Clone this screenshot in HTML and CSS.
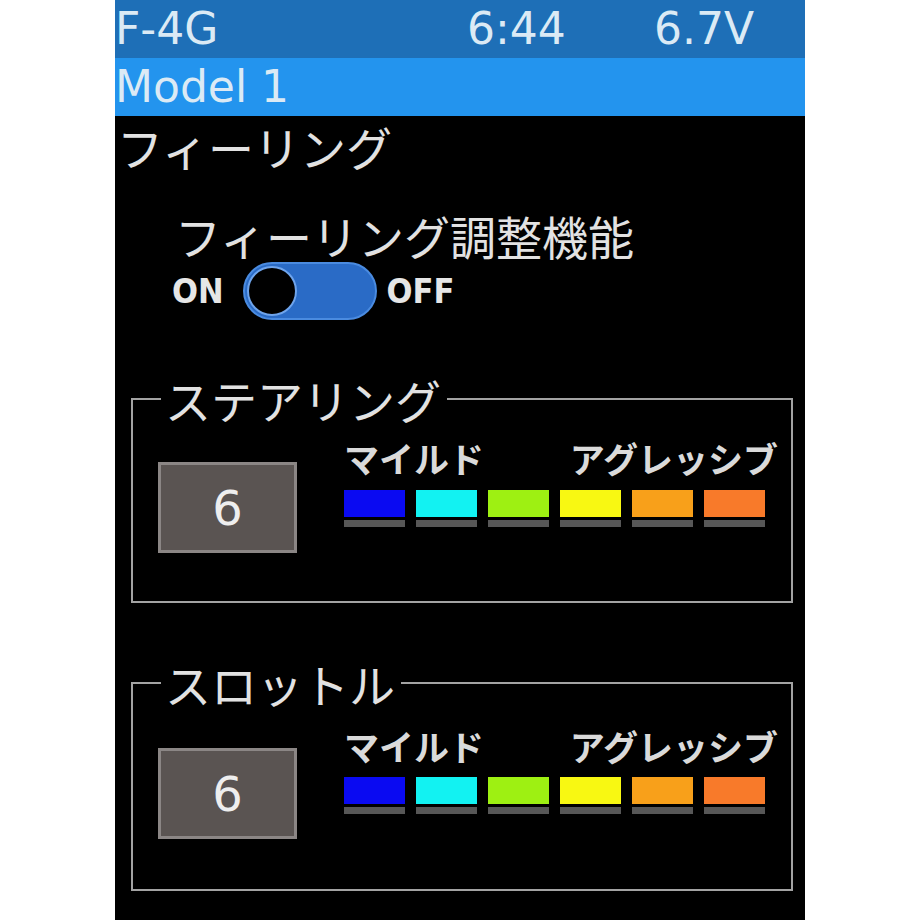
FILE: index.html
```html
<!DOCTYPE html>
<html lang="ja">
<head>
<meta charset="utf-8">
<title>フィーリング</title>
<link rel="stylesheet" href="styles.css">
</head>
<body>
<div class="screen">
  <div class="bar bar-top"><span class="model-name">F-4G</span><span class="clock">6:44</span><span class="volt">6.7V</span></div>
  <div class="bar bar-model">Model 1</div>
  <div class="page-title">フィーリング</div>
  <div class="feature-name">フィーリング調整機能</div>
  <div class="switch-row">
    <span class="sw-label">ON</span>
    <span class="switch"><span class="knob"></span></span>
    <span class="sw-label">OFF</span>
  </div>
  <fieldset class="group">
    <legend>ステアリング</legend>
    <div class="group-body">
      <div class="value">6</div>
      <div class="scale">
        <div class="scale-labels"><span>マイルド</span><span>アグレッシブ</span></div>
        <div class="scale-bars">
          <div class="cell"><div class="swatch c1"></div></div>
          <div class="cell"><div class="swatch c2"></div></div>
          <div class="cell"><div class="swatch c3"></div></div>
          <div class="cell"><div class="swatch c4"></div></div>
          <div class="cell"><div class="swatch c5"></div></div>
          <div class="cell"><div class="swatch c6"></div></div>
        </div>
      </div>
    </div>
  </fieldset>
  <fieldset class="group group-throttle">
    <legend>スロットル</legend>
    <div class="group-body">
      <div class="value">6</div>
      <div class="scale">
        <div class="scale-labels"><span>マイルド</span><span>アグレッシブ</span></div>
        <div class="scale-bars">
          <div class="cell"><div class="swatch c1"></div></div>
          <div class="cell"><div class="swatch c2"></div></div>
          <div class="cell"><div class="swatch c3"></div></div>
          <div class="cell"><div class="swatch c4"></div></div>
          <div class="cell"><div class="swatch c5"></div></div>
          <div class="cell"><div class="swatch c6"></div></div>
        </div>
      </div>
    </div>
  </fieldset>
</div>
</body>
</html>
```

FILE: styles.css
```css
body {
  margin: 0;
  background: #ffffff;
}

.screen {
  width: 690px;
  height: 920px;
  margin-left: 115px;
  background: #000000;
  overflow: hidden;
  font-family: "Noto Sans CJK JP", sans-serif;
  color: #e2e2e2;
}

.bar {
  height: 58px;
  font-family: "DejaVu Sans", sans-serif;
  font-size: 44px;
  line-height: 58px;
  color: #dbeaf5;
  white-space: nowrap;
}

.bar-top {
  display: flex;
  background: #1e6fb7;
}

.bar-model {
  background: #2394ee;
}

.model-name {
  width: 352px;
}

.clock {
  width: 187px;
}

.page-title {
  font-size: 46px;
  line-height: 60px;
  padding-left: 2px;
}

.feature-name {
  font-size: 46px;
  line-height: 54px;
  margin-top: 32px;
  padding-left: 60px;
}

.switch-row {
  display: flex;
  align-items: center;
  height: 58px;
  padding-left: 57px;
}

.sw-label {
  font-family: "DejaVu Sans Condensed", "DejaVu Sans", sans-serif;
  font-weight: bold;
  font-size: 34px;
  color: #e6e6e6;
}

.switch {
  display: flex;
  align-items: center;
  box-sizing: border-box;
  width: 134px;
  height: 58px;
  margin: 0 10px 0 19px;
  padding: 0 2px;
  border: 2px solid #4a8be0;
  border-radius: 29px;
  background: #2a6bc6;
}

.knob {
  box-sizing: border-box;
  width: 50px;
  height: 50px;
  border-radius: 50%;
  border: 2px solid #6ea4ec;
  background: #000000;
}

.group {
  margin: 56px 12px 0 16px;
  padding: 0;
  min-width: 0;
  border: 2px solid #a3a3a3;
}

.group legend {
  font-size: 46px;
  line-height: 46px;
  padding: 0 6px 0 4px;
  margin-left: 28px;
}

.group-body {
  display: flex;
  align-items: flex-start;
  padding: 0 0 48px 25px;
}

.value {
  display: flex;
  align-items: center;
  justify-content: center;
  box-sizing: border-box;
  width: 139px;
  height: 91px;
  margin-top: 40px;
  border: 3px solid #8b8685;
  background: #5a5452;
  font-family: "DejaVu Sans", sans-serif;
  font-size: 48px;
  color: #eeeeee;
}

.scale {
  width: 434px;
  margin-left: 47px;
  padding-top: 16px;
}

.scale-labels {
  display: flex;
  justify-content: space-between;
  font-size: 35px;
  font-weight: bold;
  line-height: 40px;
  color: #dadada;
}

.scale-bars {
  display: flex;
  gap: 11px;
  margin-top: 12px;
}

.cell {
  display: flex;
  flex-direction: column;
  gap: 3px;
  width: 61px;
}

.cell::after {
  content: "";
  height: 7px;
  background: #575757;
}

.swatch {
  height: 27px;
}

.c1 { background: #0a0af2; }
.c2 { background: #12f2f2; }
.c3 { background: #9ef012; }
.c4 { background: #f8f812; }
.c5 { background: #f8a01a; }
.c6 { background: #f87a2a; }

.group-throttle {
  margin-top: 57px;
}

.group-throttle .group-body {
  padding-bottom: 50px;
}

.group-throttle .value {
  margin-top: 42px;
}

.group-throttle .scale {
  padding-top: 20px;
}

.group-throttle .scale-bars {
  margin-top: 11px;
}
```
